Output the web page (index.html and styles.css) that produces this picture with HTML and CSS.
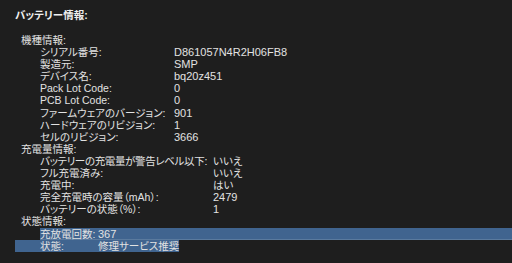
FILE: index.html
```html
<!DOCTYPE html>
<html lang="ja">
<head>
<meta charset="utf-8">
<title>バッテリー情報</title>
<link rel="stylesheet" href="styles.css">
</head>
<body>
<main class="panel">
  <h1 class="title">バッテリー情報:</h1>

  <section class="group">
    <h2 class="group-head">機種情報:</h2>
    <dl class="rows model">
      <dt>シリアル番号:</dt><dd>D861057N4R2H06FB8</dd>
      <dt>製造元:</dt><dd>SMP</dd>
      <dt>デバイス名:</dt><dd>bq20z451</dd>
      <dt class="lat">Pack Lot Code:</dt><dd>0</dd>
      <dt class="lat">PCB Lot Code:</dt><dd>0</dd>
      <dt>ファームウェアのバージョン:</dt><dd>901</dd>
      <dt>ハードウェアのリビジョン:</dt><dd>1</dd>
      <dt>セルのリビジョン:</dt><dd>3666</dd>
    </dl>
  </section>

  <section class="group">
    <h2 class="group-head">充電量情報:</h2>
    <dl class="rows charge">
      <dt class="tight">バッテリーの充電量が警告レベル以下:</dt><dd class="ja">いいえ</dd>
      <dt>フル充電済み:</dt><dd class="ja">いいえ</dd>
      <dt>充電中:</dt><dd class="ja">はい</dd>
      <dt>完全充電時の容量（mAh）:</dt><dd>2479</dd>
      <dt>バッテリーの状態（%）:</dt><dd>1</dd>
    </dl>
  </section>

  <section class="group">
    <h2 class="group-head">状態情報:</h2>
    <div class="health">
      <div class="hrow sel-full"><span class="k">充放電回数:</span><span class="v">367</span></div>
      <div class="hrow sel-part"><span class="k">状態:</span><span class="ja">修理サービス推奨</span></div>
    </div>
  </section>
</main>
</body>
</html>
```

FILE: styles.css
```css
:root {
  --lh: 12.1px;
}

html, body {
  margin: 0;
  padding: 0;
  background: #1e1e1e;
}

body {
  width: 512px;
  height: 263px;
  overflow: hidden;
  color: #e2e2e2;
  font-family: "Liberation Sans", "Noto Sans CJK JP", sans-serif;
  font-size: 10.5px;
  line-height: var(--lh);
  font-feature-settings: "palt";
}

.panel {
  padding: 9px 0 0 15px;
}

.title {
  margin: 0 0 13px 0;
  font-size: 10.5px;
  line-height: 12px;
  font-weight: bold;
  color: #efefef;
}

.group-head {
  margin: 0;
  padding-left: 6px;
  font-size: 10.5px;
  line-height: var(--lh);
  height: var(--lh);
  font-weight: normal;
}

.rows {
  margin: 0;
  padding-left: 25px;
  display: grid;
  grid-auto-rows: var(--lh);
}

.rows dt, .rows dd {
  margin: 0;
  white-space: nowrap;
}

.rows dd, .v {
  font-size: 11px;
}

.rows dt.lat {
  font-size: 10.5px;
}

.rows dt.tight {
  letter-spacing: -0.35px;
}

.rows dd.ja, .ja {
  font-size: 10.5px;
}

.model {
  grid-template-columns: 134px auto;
}

.charge {
  grid-template-columns: 173px auto;
}

.health {
  display: flex;
  flex-direction: column;
  align-items: flex-start;
}

.hrow {
  display: grid;
  grid-template-columns: 58px auto;
  height: var(--lh);
  white-space: nowrap;
}

.sel-full {
  align-self: stretch;
  margin-left: 25px;
  background: #40648f;
  box-shadow: inset 0 -1px 0 #5a7a9e;
}

.sel-part {
  padding-left: 25px;
  background: #40648f;
}
```
